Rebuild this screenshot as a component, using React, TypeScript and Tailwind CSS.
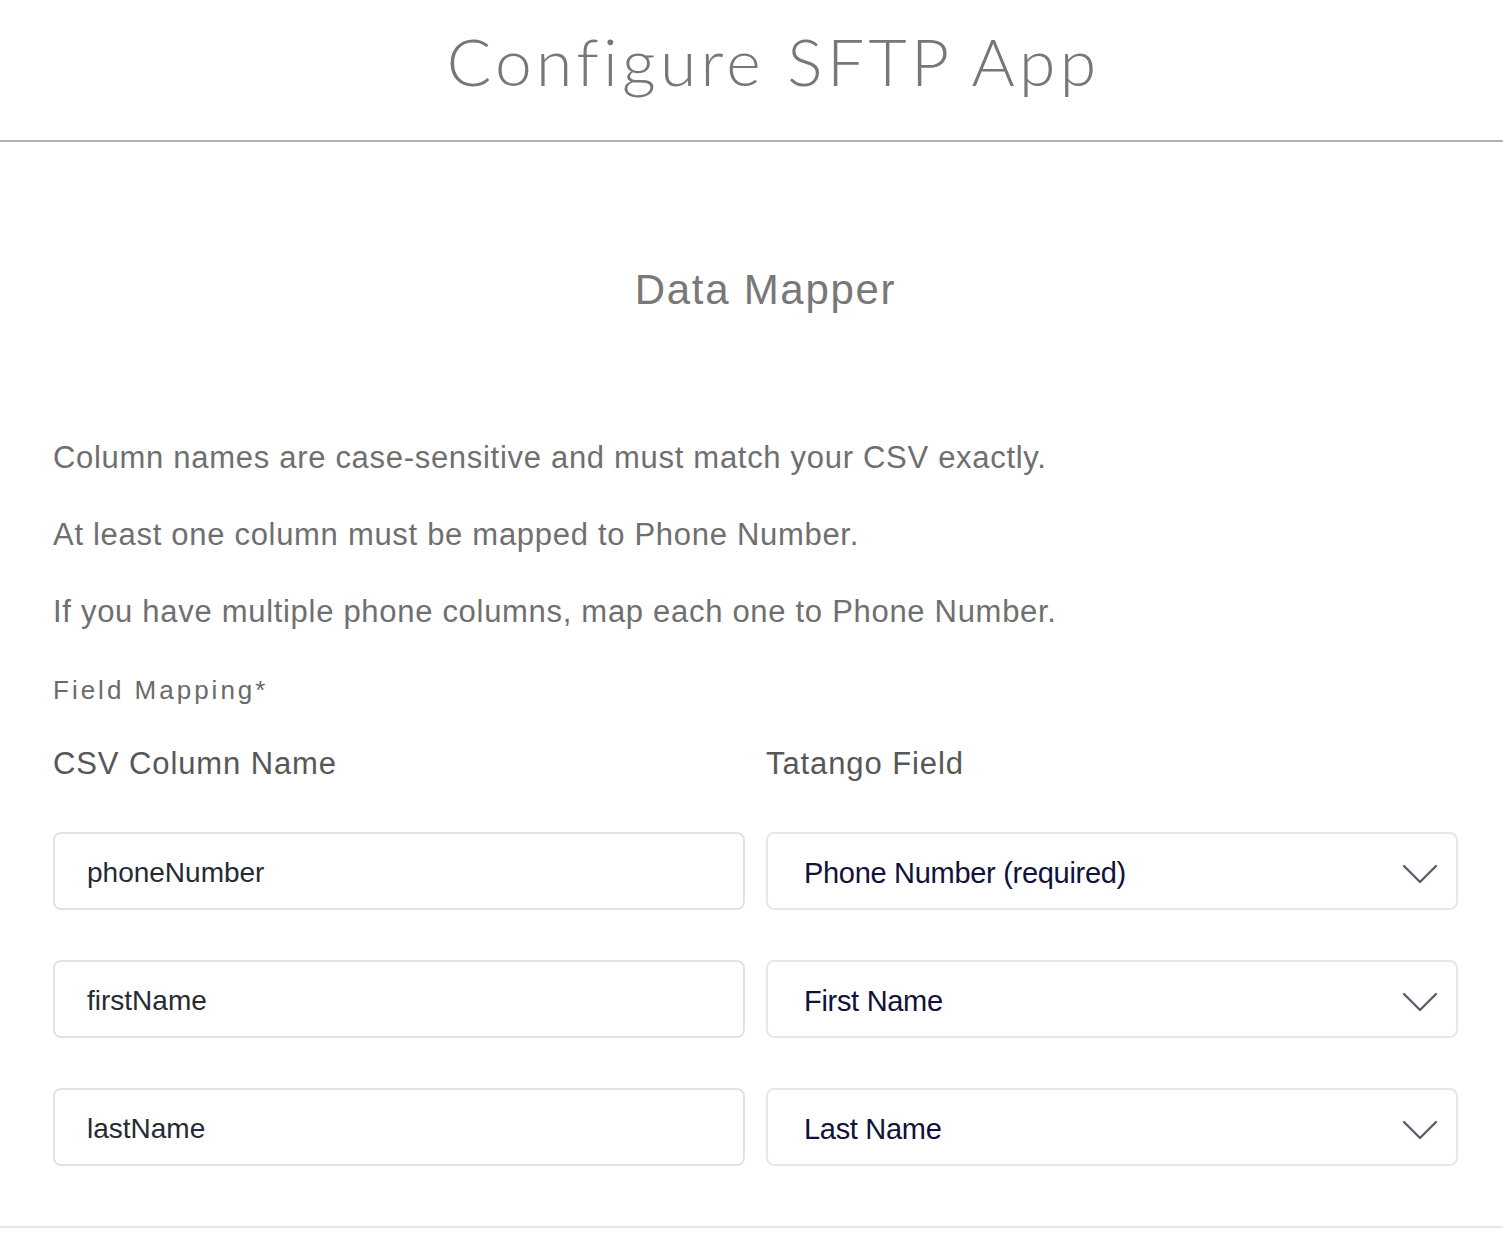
import React from 'react';

const rows = [
  { column: 'phoneNumber', field: 'Phone Number (required)' },
  { column: 'firstName', field: 'First Name' },
  { column: 'lastName', field: 'Last Name' },
];

function Chevron() {
  return (
    <svg width="36" height="22" viewBox="0 0 36 22" fill="none" className="shrink-0">
      <path d="M2 3 L18 19 L34 3" stroke="#5e5d72" strokeWidth="2.4" strokeLinecap="round" strokeLinejoin="round" />
    </svg>
  );
}

export default function App() {
  return (
    <div className="min-h-screen bg-white font-['Liberation_Sans',Arial,sans-serif]">
      <header className="h-[142px] border-b-2 border-[#b1b1a8] flex items-start justify-center pl-[44px]">
        <h1 className="mt-[18px] text-[66px] leading-[86px] font-light text-[#777777] tracking-[4.3px] font-['Lato','Liberation_Sans',sans-serif]">
          Configure SFTP App
        </h1>
      </header>

      <main className="pl-[53px] pr-[45px] border-b-2 border-[#e8e8ec] pb-[60px]">
        <h2 className="pt-[120px] text-center text-[42px] leading-[56px] text-[#787878] pl-[20px] tracking-[1.7px]">Data Mapper</h2>

        <div className="mt-[120px] text-[31px] leading-[40px] tracking-[0.7px] text-[#6f6f6f] flex flex-col gap-[37px]">
          <p>Column names are case-sensitive and must match your CSV exactly.</p>
          <p>At least one column must be mapped to Phone Number.</p>
          <p>If you have multiple phone columns, map each one to Phone Number.</p>
        </div>

        <div className="mt-[42px] text-[26px] leading-[32px] tracking-[3px] text-[#6a6a6a]">Field Mapping*</div>

        <div className="mt-[38px] grid grid-cols-2 gap-x-[21px] text-[31px] leading-[40px] tracking-[0.9px] text-[#575757]">
          <div>CSV Column Name</div>
          <div>Tatango Field</div>
        </div>

        <div className="mt-[48px] flex flex-col gap-[50px]">
          {rows.map(r => (
            <div key={r.column} className="grid grid-cols-2 gap-x-[21px]">
              <div className="h-[78px] rounded-[8px] border-2 border-[#dfe3e8] flex items-center pl-[32px] pt-[3px] text-[28px] text-[#262b33]">
                {r.column}
              </div>
              <div className="h-[78px] rounded-[8px] border-2 border-[#e6e6ec] flex items-center justify-between pl-[36px] pr-[18px] pt-[6px] text-[29px] text-[#11113a]">
                <span className="tracking-[-0.3px]">{r.field}</span>
                <Chevron />
              </div>
            </div>
          ))}
        </div>
      </main>
    </div>
  );
}
